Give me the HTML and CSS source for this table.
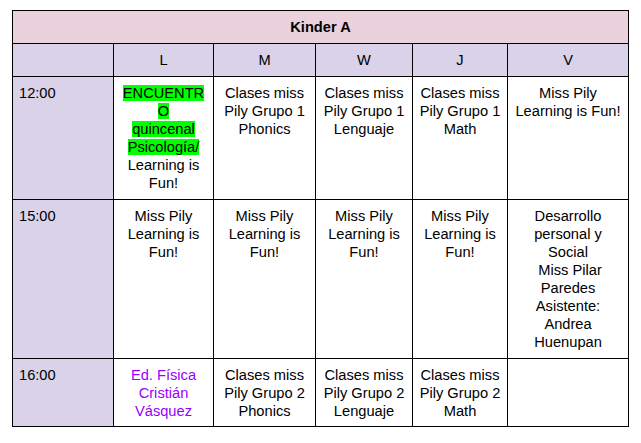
FILE: index.html
```html
<!DOCTYPE html>
<html lang="es">
<head>
<meta charset="utf-8">
<title>Kinder A</title>
<link rel="stylesheet" href="styles.css">
</head>
<body>
<table class="schedule">
  <colgroup>
    <col class="c-time">
    <col class="c-l">
    <col class="c-m">
    <col class="c-w">
    <col class="c-j">
    <col class="c-v">
  </colgroup>
  <thead>
    <tr class="title-row"><th colspan="6">Kinder A</th></tr>
    <tr class="days-row">
      <th></th><th>L</th><th>M</th><th>W</th><th>J</th><th>V</th>
    </tr>
  </thead>
  <tbody>
    <tr class="r1">
      <td class="time">12:00</td>
      <td><span class="hl">ENCUENTRO</span><br><span class="hl">quincenal Psicología/</span><wbr>Learning is Fun!</td>
      <td>Clases miss Pily Grupo 1 Phonics</td>
      <td>Clases miss Pily Grupo 1 Lenguaje</td>
      <td>Clases miss Pily Grupo 1 Math</td>
      <td>Miss Pily Learning is Fun!</td>
    </tr>
    <tr class="r2">
      <td class="time">15:00</td>
      <td>Miss Pily Learning is Fun!</td>
      <td>Miss Pily Learning is Fun!</td>
      <td>Miss Pily Learning is Fun!</td>
      <td>Miss Pily Learning is Fun!</td>
      <td>Desarrollo personal y Social<br>&nbsp;Miss Pilar Paredes<br>Asistente: Andrea Huenupan</td>
    </tr>
    <tr class="r3">
      <td class="time">16:00</td>
      <td class="purple">Ed. Física Cristián Vásquez</td>
      <td>Clases miss Pily Grupo 2 Phonics</td>
      <td>Clases miss Pily Grupo 2 Lenguaje</td>
      <td>Clases miss Pily Grupo 2 Math</td>
      <td></td>
    </tr>
  </tbody>
</table>
</body>
</html>
```

FILE: styles.css
```css
html, body {
  margin: 0;
  padding: 0;
  background: #ffffff;
}
body {
  padding: 10px 0 0 12px;
  font-family: "Liberation Sans", Arial, sans-serif;
  font-size: 14.67px;
  line-height: 18px;
  color: #000000;
}
.schedule {
  border-collapse: collapse;
  table-layout: fixed;
  width: 616px;
}
.c-time { width: 101px; }
.c-l { width: 100px; }
.c-m { width: 102px; }
.c-w { width: 97px; }
.c-j { width: 95px; }
.c-v { width: 121px; }
.schedule th,
.schedule td {
  border: 1px solid #000000;
  padding: 7px 6px;
  vertical-align: top;
  text-align: center;
  font-weight: normal;
  overflow-wrap: break-word;
}
.schedule tr.r3 td {
  padding-bottom: 6px;
}
.title-row th {
  background: #ead1dc;
  font-weight: bold;
}
.days-row th {
  background: #d9d2e9;
}
.schedule td.time {
  background: #d9d2e9;
  text-align: left;
}
.hl {
  background: #00ff00;
}
.purple {
  color: #9900ff;
}
```
